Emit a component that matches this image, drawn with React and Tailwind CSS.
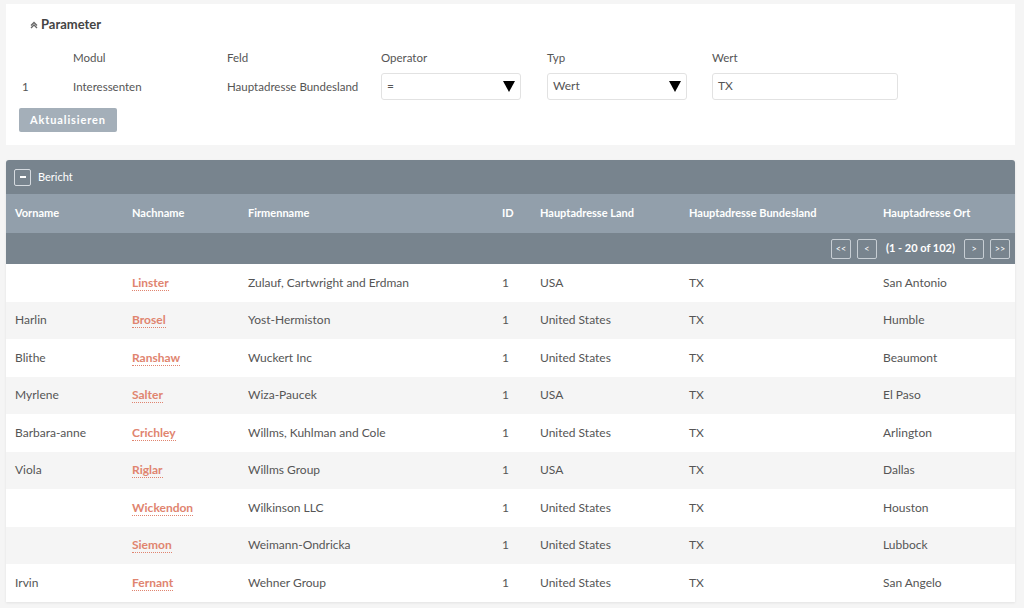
import React from "react";

const rows = [
  ["", "Linster", "Zulauf, Cartwright and Erdman", "USA", "San Antonio"],
  ["Harlin", "Brosel", "Yost-Hermiston", "United States", "Humble"],
  ["Blithe", "Ranshaw", "Wuckert Inc", "United States", "Beaumont"],
  ["Myrlene", "Salter", "Wiza-Paucek", "USA", "El Paso"],
  ["Barbara-anne", "Crichley", "Willms, Kuhlman and Cole", "United States", "Arlington"],
  ["Viola", "Riglar", "Willms Group", "USA", "Dallas"],
  ["", "Wickendon", "Wilkinson LLC", "United States", "Houston"],
  ["", "Siemon", "Weimann-Ondricka", "United States", "Lubbock"],
  ["Irvin", "Fernant", "Wehner Group", "United States", "San Angelo"],
];

const Select = ({ value, width }) => (
  <div className={`${width} h-[27px] bg-white border border-[#e2e2e2] rounded-[3px] flex items-center justify-between px-[5px]`}>
    <span className="text-[12px] text-[#555]">{value}</span>
    <svg width="12" height="11" viewBox="0 0 12 11"><path d="M0 0 H12 L6 11 Z" fill="#000" /></svg>
  </div>
);

const PageBtn = ({ children, className }) => (
  <div className={`w-[20px] h-[20px] border border-[#c7ced4] rounded-[2px] flex items-center justify-center text-[9px] text-white ${className}`}>
    {children}
  </div>
);

const App = () => {
  return (
    <div className="w-[1024px] h-[608px] overflow-hidden bg-[#f5f5f5] pt-[4px] pl-[6px] pr-[9px]" style={{ fontFamily: "Lato, 'Open Sans', sans-serif" }}>
      <div className="bg-white h-[141px] pt-[11px] pl-[13px]">
        <div className="flex items-center gap-[3px] pl-[11px] text-[13px] font-bold text-[#444]">
          <svg width="8" height="8" viewBox="0 0 8 8"><path d="M1 4.5 L4 1.5 L7 4.5 M1 7 L4 4 L7 7" stroke="#666" strokeWidth="1.3" fill="none" /></svg>
          Parameter
        </div>
        <div className="mt-[14px] flex text-[11.5px] text-[#555]">
          <div className="w-[54px]"></div>
          <div className="w-[154px]">Modul</div>
          <div className="w-[154px]">Feld</div>
          <div className="w-[166px]">Operator</div>
          <div className="w-[165px]">Typ</div>
          <div>Wert</div>
        </div>
        <div className="mt-[7px] flex items-center text-[11.5px] text-[#555]">
          <div className="w-[54px] pl-[3px]">1</div>
          <div className="w-[154px]">Interessenten</div>
          <div className="w-[154px]">Hauptadresse Bundesland</div>
          <div className="w-[166px]"><Select value="=" width="w-[140px]" /></div>
          <div className="w-[165px]"><Select value="Wert" width="w-[140px]" /></div>
          <div className="w-[186px] h-[27px] bg-white border border-[#e2e2e2] rounded-[3px] flex items-center px-[5px] text-[12px] text-[#555]">TX</div>
        </div>
        <button className="mt-[8px] h-[24px] w-[98px] bg-[#a4afb9] rounded-[2px] text-white text-[11px] font-bold tracking-[0.08em]">
          Aktualisieren
        </button>
      </div>

      <div className="mt-[15px] rounded-t-[3px] overflow-hidden shadow-[0_1px_3px_rgba(0,0,0,0.08)]">
        <div className="h-[34px] bg-[#78848e] flex items-center pl-[8px] gap-[7px]">
          <div className="w-[17px] h-[17px] border border-[#d6dbe0] rounded-[2px] flex items-center justify-center">
            <div className="w-[6px] h-[1.5px] bg-white"></div>
          </div>
          <span className="text-white text-[11px]">Bericht</span>
        </div>
        <div className="h-[39px] bg-[#929fab] flex items-center text-white font-bold text-[11px]">
          <div className="w-[126px] pl-[9px]">Vorname</div>
          <div className="w-[116px]">Nachname</div>
          <div className="w-[254px]">Firmenname</div>
          <div className="w-[38px]">ID</div>
          <div className="w-[149px]">Hauptadresse Land</div>
          <div className="w-[194px]">Hauptadresse Bundesland</div>
          <div>Hauptadresse Ort</div>
        </div>
        <div className="h-[31px] bg-[#78848e] flex items-center justify-end pr-[5px] gap-[6px]">
          <PageBtn>&lt;&lt;</PageBtn>
          <PageBtn className="w-[18px]">&lt;</PageBtn>
          <span className="text-white font-bold text-[11px] px-[3px]">(1 - 20 of 102)</span>
          <PageBtn className="w-[18px]">&gt;</PageBtn>
          <PageBtn>&gt;&gt;</PageBtn>
        </div>
        {rows.map((r, i) => (
          <div key={i} className={`h-[37.5px] flex items-center text-[12px] text-[#555] ${i % 2 === 0 ? "bg-white" : "bg-[#f5f5f5]"}`}>
            <div className="w-[126px] pl-[9px]">{r[0]}</div>
            <div className="w-[116px]">
              <span className="text-[#e0846f] font-bold border-b border-dotted border-[#e0846f]">{r[1]}</span>
            </div>
            <div className="w-[254px]">{r[2]}</div>
            <div className="w-[38px]">1</div>
            <div className="w-[149px]">{r[3]}</div>
            <div className="w-[194px]">TX</div>
            <div>{r[4]}</div>
          </div>
        ))}
      </div>
    </div>
  );
};

export default App;
